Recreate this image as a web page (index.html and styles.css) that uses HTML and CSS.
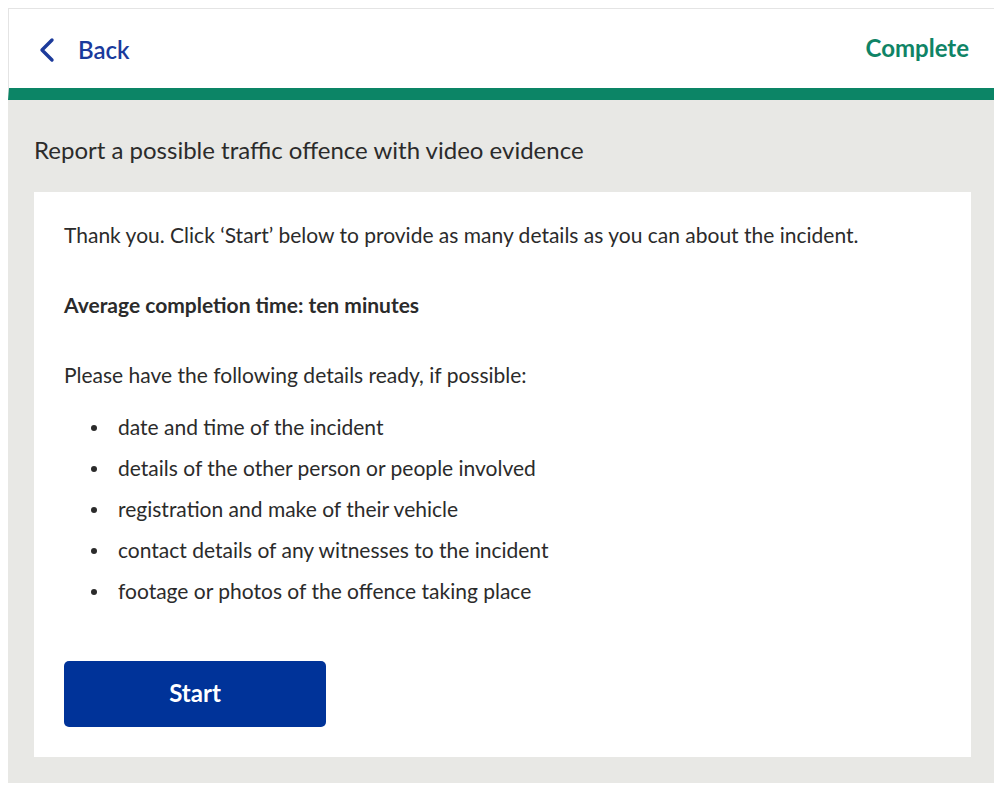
FILE: index.html
```html
<!DOCTYPE html>
<html lang="en">
<head>
    <meta charset="UTF-8">
    <meta name="viewport" content="width=device-width, initial-scale=1.0">
    <title>Report a possible traffic offence</title>
    <link rel="stylesheet" href="styles.css">
</head>
<body>
    <div class="frame">
        <header class="topbar">
            <a class="back" href="#">
                <svg class="chevron" width="18" height="26" viewBox="0 0 18 26">
                    <path d="M14 3 L4 13 L14 23" fill="none" stroke="#1d3b9b" stroke-width="3.4" stroke-linecap="round" stroke-linejoin="round"/>
                </svg>
                <span>Back</span>
            </a>
            <span class="status">Complete</span>
        </header>

        <main class="content">
            <h1 class="title">Report a possible traffic offence with video evidence</h1>

            <div class="card">
                <p>Thank you. Click ‘Start’ below to provide as many details as you can about the incident.</p>
                <p class="strong">Average completion time: ten minutes</p>
                <p class="lead">Please have the following details ready, if possible:</p>
                <ul class="details">
                    <li>date and time of the incident</li>
                    <li>details of the other person or people involved</li>
                    <li>registration and make of their vehicle</li>
                    <li>contact details of any witnesses to the incident</li>
                    <li>footage or photos of the offence taking place</li>
                </ul>
                <button class="start">Start</button>
            </div>
        </main>
    </div>
</body>
</html>
```

FILE: styles.css
```css
body {
    margin: 8px;
    font-family: Lato, "Open Sans", sans-serif;
    color: #2b2b2b;
    background-color: #fff;
}
.frame {
    width: 987px;
    height: 775px;
    border-top: 1px solid #e4e4e4;
    box-sizing: border-box;
    background-color: #e8e8e5;
    display: flex;
    flex-direction: column;
}
.topbar {
    height: 79px;
    background-color: #fff;
    border-bottom: 12px solid #0c8566;
    border-left: 1px solid #e4e4e4;
    display: flex;
    align-items: center;
    justify-content: space-between;
    padding: 0 26px 0 29px;
}
.back {
    display: flex;
    align-items: center;
    gap: 22px;
    color: #1a3a9c;
    text-decoration: none;
    font-size: 24px;
    font-weight: 600;
    margin-top: 2px;
}
.chevron {
    display: block;
}
.status {
    color: #0f8466;
    font-size: 24px;
    font-weight: 700;
    margin-top: -2px;
}
.content {
    flex: 1;
    padding: 0 24px 26px 26px;
    display: flex;
    flex-direction: column;
}
.title {
    font-size: 24px;
    font-weight: 400;
    color: #2b2b2b;
    margin: 35px 0 27px 0;
    line-height: 30px;
}
.card {
    flex: 1;
    background-color: #fff;
    padding: 28px 30px 30px 30px;
    font-size: 21px;
    line-height: 30px;
}
.card p {
    margin: 0 0 40px 0;
}
.card .strong {
    font-weight: 700;
}
.card .lead {
    margin-bottom: 22px;
}
.details {
    margin: 0;
    padding-left: 54px;
    list-style: none;
}
.details li {
    position: relative;
    margin-bottom: 11px;
}
.details li::before {
    content: "";
    position: absolute;
    left: -27px;
    top: 13px;
    width: 6px;
    height: 6px;
    border-radius: 50%;
    background-color: #2b2b2b;
}
.start {
    margin-top: 44px;
    width: 262px;
    height: 66px;
    padding: 0 0 3px 0;
    background-color: #003399;
    color: #fff;
    border: none;
    border-radius: 5px;
    font-family: Lato, sans-serif;
    font-size: 24px;
    font-weight: 700;
    cursor: pointer;
}
```
